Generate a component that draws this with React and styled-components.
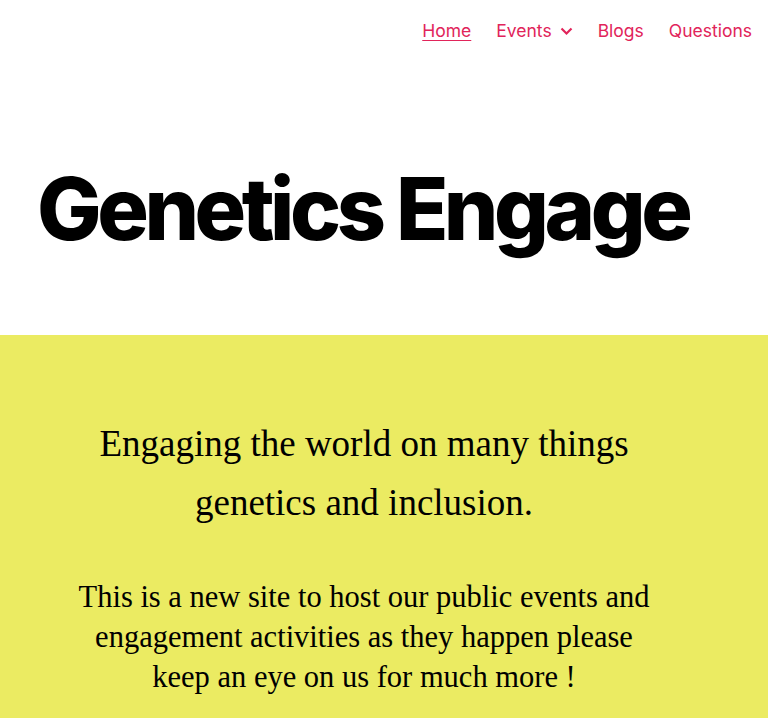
import React from "react";
import styled, { createGlobalStyle } from "styled-components";

const Global = createGlobalStyle`
  html, body { margin: 0; padding: 0; background: #fff; }
  body { font-family: Inter, "Noto Sans", sans-serif; overflow: hidden; }
`;

const Page = styled.div`
  width: 768px;
  min-height: 718px;
  display: flex;
  flex-direction: column;
`;

const Header = styled.header`
  display: flex;
  flex-direction: column;
  height: 335px;
  padding: 19px 16px 0 0;
  box-sizing: border-box;
`;

const Nav = styled.nav`
  display: flex;
  justify-content: flex-end;
  align-items: center;
  gap: 25px;
  align-self: flex-end;
`;

const NavLink = styled.a`
  font-family: Inter, "Noto Sans", sans-serif;
  font-size: 17.5px;
  line-height: 24px;
  color: #e1245a;
  text-decoration: ${(p) => (p.$active ? "underline" : "none")};
  text-underline-offset: 3px;
  text-decoration-thickness: 1px;
  display: flex;
  align-items: center;
  gap: 8px;
  cursor: pointer;
`;

const Title = styled.h1`
  margin: 123px 0 0;
  padding-left: 37px;
  font-family: Inter, "Noto Sans", sans-serif;
  font-weight: 800;
  font-size: 86px;
  line-height: 86px;
  letter-spacing: -0.052em;
  color: #000;
`;

const Band = styled.section`
  flex: 1;
  background: #ebeb62;
  display: flex;
  flex-direction: column;
  align-items: center;
  padding: 79px 40px 0 0;
  font-family: "Liberation Serif", serif;
  color: #000;
`;

const Lead = styled.h2`
  margin: 0;
  width: 580px;
  text-align: center;
  font-weight: 400;
  font-size: 37px;
  line-height: 59px;
`;

const Body = styled.p`
  margin: 45px 0 0;
  width: 584px;
  text-align: center;
  font-size: 30.5px;
  line-height: 40px;
`;

const Chevron = () => (
  <svg width="13" height="9" viewBox="0 0 13 9" fill="none">
    <path d="M1.5 1.5 L6.5 6.5 L11.5 1.5" stroke="currentColor" strokeWidth="2.2" />
  </svg>
);

export default function App() {
  return (
    <Page>
      <Global />
      <Header>
        <Nav>
          <NavLink $active>Home</NavLink>
          <NavLink>
            Events <Chevron />
          </NavLink>
          <NavLink>Blogs</NavLink>
          <NavLink>Questions</NavLink>
        </Nav>
        <Title>Genetics Engage</Title>
      </Header>
      <Band>
        <Lead>Engaging the world on many things genetics and inclusion.</Lead>
        <Body>
          This is a new site to host our public events and engagement activities as they happen please keep an eye on us for much more !
        </Body>
      </Band>
    </Page>
  );
}
